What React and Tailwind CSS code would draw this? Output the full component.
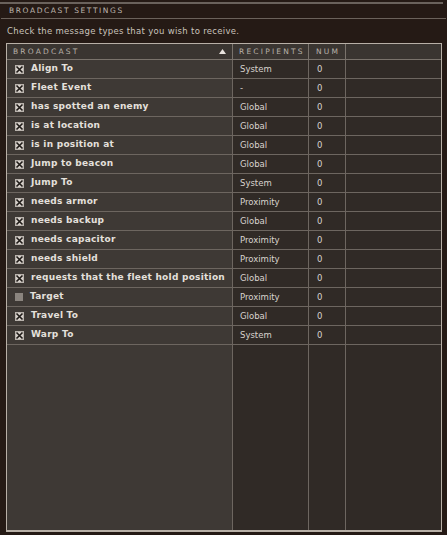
import React from "react";

const rows = [
  ["Align To", "System", true],
  ["Fleet Event", "-", true],
  ["has spotted an enemy", "Global", true],
  ["is at location", "Global", true],
  ["is in position at", "Global", true],
  ["Jump to beacon", "Global", true],
  ["Jump To", "System", true],
  ["needs armor", "Proximity", true],
  ["needs backup", "Global", true],
  ["needs capacitor", "Proximity", true],
  ["needs shield", "Proximity", true],
  ["requests that the fleet hold position", "Global", true],
  ["Target", "Proximity", false],
  ["Travel To", "Global", true],
  ["Warp To", "System", true],
];

function Box({ checked }) {
  if (!checked) return <div className="w-[8px] h-[8px] shrink-0 bg-[#8a847e]" />;
  return (
    <svg className="shrink-0" width="9" height="9" viewBox="0 0 9 9">
      <rect x="0" y="0" width="9" height="9" fill="#b9b3ad" />
      <rect x="1" y="1" width="7" height="7" fill="#d6d0ca" />
      <path d="M1.5 1.5 L7.5 7.5 M7.5 1.5 L1.5 7.5" stroke="#1e1a17" strokeWidth="1.6" />
    </svg>
  );
}

export default function App() {
  const font = { fontFamily: '"DejaVu Sans", "Liberation Sans", sans-serif' };
  return (
    <div className="w-[447px] h-[535px] bg-[#251a15] overflow-hidden relative" style={font}>
      <div className="h-[2px] bg-[#6a625c] mr-[4px] mt-[2px]" />
      <div className="h-[14px] flex items-center pl-[9px] text-[7.5px] tracking-[1.6px] text-[#bdb6ae]">
        BROADCAST SETTINGS
      </div>
      <div className="h-[1px] bg-[#6b625b] mx-[1px]" />
      <div className="h-[24px] flex items-center pl-[7px] text-[8.5px] tracking-[0.3px] text-[#c9c3bc]">
        Check the message types that you wish to receive.
      </div>
      <div className="ml-[6px] mr-[5px] h-[489px] border-l-[1px] border-b-[2px] border-r-[1px] border-t-[1px] border-[#b8b0a7] bg-[#302a26] flex flex-col">
        <div className="flex h-[16px] bg-[#3a3531] border-b border-[#7a736c] text-[7.5px] tracking-[2.2px] text-[#b8b1a9]">
          <div className="w-[226px] flex items-center pl-[6px] border-r border-[#7a736c] relative">
            BROADCAST
            <svg className="absolute right-[6px] top-[5px]" width="7" height="5" viewBox="0 0 7 5">
              <path d="M0 5 L3.5 0 L7 5 Z" fill="#e8e3de" />
            </svg>
          </div>
          <div className="w-[76px] flex items-center pl-[6px] border-r border-[#7a736c]">RECIPIENTS</div>
          <div className="w-[37px] flex items-center pl-[7px] border-r border-[#7a736c]">NUM</div>
          <div className="flex-1" />
        </div>
        <div className="flex flex-1">
          <div className="w-[226px] bg-[#3e3935] border-r border-[#6d6660] flex flex-col">
            {rows.map(([n, , c], i) => (
              <div key={i} className="h-[19px] border-b border-[#6d6660] flex items-center pl-[8px] gap-[7px] overflow-hidden">
                <Box checked={c} />
                <span className="text-[9px] font-bold tracking-[0.25px] text-[#e4e0dc] whitespace-nowrap">{n}</span>
              </div>
            ))}
          </div>
          <div className="w-[76px] border-r border-[#6d6660] flex flex-col">
            {rows.map(([, r], i) => (
              <div key={i} className="h-[19px] border-b border-[#6d6660] flex items-center pl-[7px] text-[8.5px] text-[#d8d3ce]">
                {r}
              </div>
            ))}
          </div>
          <div className="w-[37px] border-r border-[#6d6660] flex flex-col">
            {rows.map((_, i) => (
              <div key={i} className="h-[19px] border-b border-[#6d6660] flex items-center pl-[8px] text-[8.5px] text-[#d8d3ce]">
                0
              </div>
            ))}
          </div>
          <div className="flex-1 flex flex-col">
            {rows.map((_, i) => (
              <div key={i} className="h-[19px] border-b border-[#6d6660]" />
            ))}
          </div>
        </div>
      </div>
    </div>
  );
}
